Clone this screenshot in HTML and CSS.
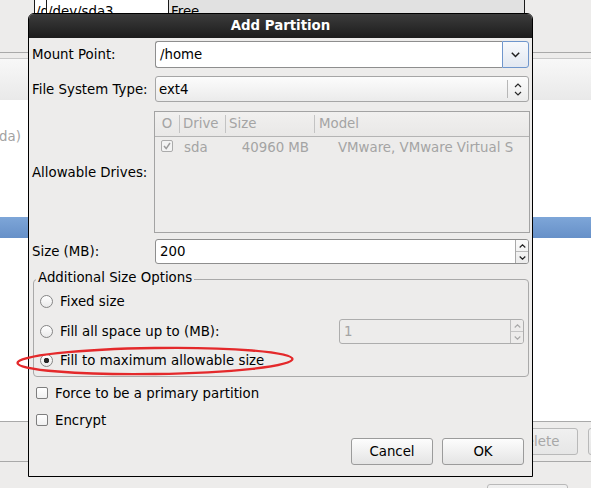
FILE: index.html
```html
<!DOCTYPE html>
<html>
<head>
<meta charset="utf-8">
<title>Add Partition</title>
<link rel="stylesheet" href="styles.css">
</head>
<body>
<div class="screen">
  <div class="bg">
    <div class="bg-top">
      <div class="ptable">
        <div class="pcell c1">/d</div>
        <div class="pcell c2">/dev/sda3</div>
        <div class="pcell c3">Free</div>
      </div>
    </div>
    <div class="bg-rule"></div>
    <div class="bg-toolbar"></div>
    <div class="bg-list">
      <div class="list-text">da)</div>
      <div class="list-sel"></div>
    </div>
    <div class="bg-footer">
      <div class="bg-btn b-delete">Delete</div>
      <div class="bg-btn b-next">Reset</div>
    </div>
    <div class="bg-bottom">
      <div class="bg-btn b-back">Back</div>
    </div>
  </div>

  <div class="dialog">
    <div class="titlebar">Add Partition</div>
    <div class="dbody">
      <div class="row r-mount">
        <span class="lbl">Mount Point:</span>
        <div class="combo-entry">
          <div class="entry">/home</div>
          <div class="drop-btn">
            <svg width="9" height="6" viewBox="0 0 9 6"><polyline points="0.8,0.8 4.5,4.5 8.2,0.8" fill="none" stroke="#1e1e1e" stroke-width="1.5"/></svg>
          </div>
        </div>
      </div>

      <div class="row r-fs">
        <span class="lbl">File System Type:</span>
        <div class="combo-btn">
          <span class="cb-text">ext4</span>
          <span class="cb-sep"></span>
          <span class="cb-arrows">
            <svg width="8" height="13" viewBox="0 0 8 13"><polyline points="1,4 4,1 7,4" fill="none" stroke="#2a2a2a" stroke-width="1.2"/><polyline points="1,9 4,12 7,9" fill="none" stroke="#2a2a2a" stroke-width="1.2"/></svg>
          </span>
        </div>
      </div>

      <div class="row r-drives">
        <span class="lbl">Allowable Drives:</span>
        <div class="drives">
          <div class="dhead">
            <span class="h h0">O</span>
            <span class="h h1">Drive</span>
            <span class="h h2">Size</span>
            <span class="h h3">Model</span>
          </div>
          <div class="drow">
            <span class="d0"><span class="tchk"><svg width="10" height="10" viewBox="0 0 10 10"><polyline points="2,5 4.2,7.6 8,2" fill="none" stroke="#9c9c9c" stroke-width="1.5"/></svg></span></span>
            <span class="d1">sda</span>
            <span class="d2">40960 MB</span>
            <span class="d3">VMware, VMware Virtual S</span>
          </div>
        </div>
      </div>

      <div class="row r-size">
        <span class="lbl">Size (MB):</span>
        <div class="spin">
          <div class="spin-text">200</div>
          <div class="spin-btns">
            <span class="sb"><svg width="7" height="4" viewBox="0 0 7 4"><polyline points="0.7,3.5 3.5,0.8 6.3,3.5" fill="none" stroke="#222" stroke-width="1.2"/></svg></span>
            <span class="sb sb-down"><svg width="7" height="4" viewBox="0 0 7 4"><polyline points="0.7,0.5 3.5,3.2 6.3,0.5" fill="none" stroke="#222" stroke-width="1.2"/></svg></span>
          </div>
        </div>
      </div>

      <fieldset class="opts">
        <legend>Additional Size Options</legend>
        <div class="opt"><span class="radio"></span>Fixed size</div>
        <div class="opt opt-fill"><span class="radio"></span>Fill all space up to (MB):
          <div class="spin spin-dis">
            <div class="spin-text">1</div>
            <div class="spin-btns">
              <span class="sb"><svg width="7" height="4" viewBox="0 0 7 4"><polyline points="0.7,3.5 3.5,0.8 6.3,3.5" fill="none" stroke="#a8a8a8" stroke-width="1.1"/></svg></span>
              <span class="sb sb-down"><svg width="7" height="4" viewBox="0 0 7 4"><polyline points="0.7,0.5 3.5,3.2 6.3,0.5" fill="none" stroke="#a8a8a8" stroke-width="1.1"/></svg></span>
            </div>
          </div>
        </div>
        <div class="opt opt-max"><span class="radio on"></span>Fill to maximum allowable size</div>
      </fieldset>

      <div class="check-row cr1"><span class="chk"></span>Force to be a primary partition</div>
      <div class="check-row cr2"><span class="chk"></span>Encrypt</div>

      <div class="actions">
        <button class="btn">Cancel</button>
        <button class="btn">OK</button>
      </div>
    </div>
  </div>

  <svg class="annot" width="591" height="488" viewBox="0 0 591 488">
    <ellipse cx="155" cy="361" rx="137.5" ry="13" fill="none" stroke="#e4292b" stroke-width="2.4" transform="rotate(-0.8 155 361)"/>
  </svg>
</div>
</body>
</html>
```

FILE: styles.css
```css
* { box-sizing: border-box; }

html, body {
  margin: 0;
  padding: 0;
}

body {
  width: 591px;
  height: 488px;
  overflow: hidden;
  background: #edeceb;
  font-family: "DejaVu Sans", "Liberation Sans", sans-serif;
  font-size: 13.33px;
  color: #000;
}

.screen {
  position: relative;
  width: 591px;
  height: 488px;
  overflow: hidden;
}

/* ---------- background window ---------- */
.bg-top { height: 52px; }

.ptable {
  display: flex;
  margin-left: 34px;
  width: 491px;
  height: 13px;
  overflow: hidden;
}

.pcell {
  height: 13px;
  padding-top: 4px;
  line-height: 16px;
  white-space: nowrap;
  overflow: hidden;
  border-left: 1px solid #1a1a1a;
}

.c1 { width: 12px; background: #fff; padding-left: 1px; }
.c2 { width: 122px; background: #fff; padding-left: 1px; }
.c3 {
  flex: 1;
  background: #e1e1e1;
  padding-left: 2px;
  border-right: 1px solid #1a1a1a;
}

.bg-rule {
  height: 1px;
  background: #a9a9a9;
  margin-bottom: 5px;
}

.bg-toolbar {
  height: 42px;
  border-top: 1px solid #c9c9c9;
  background: linear-gradient(#f8f8f8, #e9e9e9);
}

.bg-list {
  height: 322px;
  background: #fff;
  border-bottom: 1px solid #a9a9a9;
  padding-top: 29px;
}

.list-text {
  height: 16px;
  line-height: 16px;
  margin-left: -1px;
  color: #a2a2a2;
}

.list-sel {
  margin-top: 72px;
  height: 21px;
  background: linear-gradient(#7ea6d8, #6690c8);
}

.bg-footer {
  height: 40px;
  display: flex;
  gap: 10px;
  padding: 6px 0 0 490px;
  border-bottom: 1px solid #a9a9a9;
}

.bg-btn {
  flex: none;
  height: 27px;
  line-height: 25px;
  border: 1px solid #b9b9b9;
  border-radius: 3px;
  background: linear-gradient(#f0f0f0, #e6e6e6);
  color: #a7a7a7;
  text-align: center;
}

.b-delete { width: 88px; padding-left: 7px; }
.b-next { width: 80px; }

.bg-bottom {
  height: 25px;
  padding: 22px 0 0 487px;
}

.b-back { width: 81px; }

/* ---------- dialog ---------- */
.dialog {
  position: absolute;
  left: 28px;
  top: 13px;
  width: 505px;
  height: 464px;
  border: 1px solid #000;
  border-radius: 6px 6px 0 0;
  background: #edeceb;
  overflow: hidden;
}

.titlebar {
  height: 24px;
  line-height: 24px;
  text-align: center;
  font-weight: bold;
  color: #fff;
  background: linear-gradient(#3c3c3c, #1c1c1c);
}

.dbody {
  padding: 0 3px 11px 3px;
}

.row {
  display: grid;
  grid-template-columns: 123px 1fr;
  align-items: center;
}

.lbl { white-space: nowrap; }

.r-mount { margin-top: 3px; height: 27px; }
.r-fs { margin-top: 8px; height: 26px; }
.r-drives { margin-top: 9px; height: 122px; }
.r-size { margin-top: 6px; height: 25px; }

/* mount combo entry */
.combo-entry {
  display: flex;
  height: 27px;
}

.entry {
  flex: 1;
  border: 1px solid #8e8e8e;
  border-right: none;
  border-radius: 3px 0 0 3px;
  background: #fff;
  padding-left: 4px;
  line-height: 25px;
}

.drop-btn {
  width: 27px;
  border: 1px solid #6f96cc;
  border-radius: 0 3px 3px 0;
  background: linear-gradient(#f7f9fc, #e2e8f1);
  display: flex;
  align-items: center;
  justify-content: center;
}

/* fs combo button */
.combo-btn {
  display: flex;
  align-items: center;
  height: 26px;
  border: 1px solid #a6a6a6;
  border-radius: 3px;
  background: linear-gradient(#fcfcfc, #ebebeb);
  padding-left: 3px;
}

.cb-text { flex: 1; }

.cb-sep {
  width: 1px;
  height: 18px;
  background: #b7b7b7;
}

.cb-arrows {
  width: 20px;
  display: flex;
  justify-content: center;
  align-items: center;
}

/* drives table */
.drives {
  margin: 0 -1px;
  height: 122px;
  border: 1px solid #a3a3a3;
  background: #edeceb;
  color: #a4a4a4;
}

.dhead {
  display: flex;
  height: 25px;
  border-bottom: 1px solid #b4b4b4;
  background: linear-gradient(#f1f0ef, #e9e8e7);
}

.h {
  line-height: 24px;
  white-space: nowrap;
}

.h0 { width: 24px; text-align: center; }
.h1, .h2, .h3 {
  background: linear-gradient(#c3c3c3, #c3c3c3) left center / 1px 18px no-repeat;
  padding-left: 4px;
}
.h1 { width: 46px; }
.h2 { width: 89px; }
.h3 { flex: 1; padding-left: 5px; }

.drow {
  display: flex;
  height: 20px;
  align-items: center;
  white-space: nowrap;
}

.d0 {
  width: 24px;
  align-self: flex-start;
  padding-top: 3px;
  display: flex;
  justify-content: center;
}

.tchk {
  width: 12px;
  height: 12px;
  border: 1px solid #ababab;
  border-radius: 2px;
  background: #f3f3f3;
  display: flex;
  align-items: center;
  justify-content: center;
}

.d1 { width: 46px; padding-left: 5px; }
.d2 { width: 89px; text-align: right; padding-right: 5px; }
.d3 { flex: 1; padding-left: 24px; }

/* spin buttons */
.spin {
  display: flex;
  height: 25px;
  border: 1px solid #8e8e8e;
  border-radius: 3px;
  background: #fff;
}

.spin-text {
  flex: 1;
  padding-left: 4px;
  line-height: 23px;
}

.spin-btns {
  width: 13px;
  border-left: 1px solid #a9a9a9;
  display: flex;
  flex-direction: column;
  background: linear-gradient(#fafafa, #ececec);
  border-radius: 0 2px 2px 0;
}

.sb {
  flex: 1;
  display: flex;
  align-items: center;
  justify-content: center;
}

.sb-down { border-top: 1px solid #b9b9b9; }

/* additional options */
.opts {
  margin: 6px 0 0 1px;
  padding: 0 4px 4px 2px;
  border: 1px solid #a9a9a9;
  border-radius: 4px;
  min-width: 0;
}

.opts legend {
  padding: 0 2px 3px 2px;
  line-height: 16px;
}

.opt {
  display: flex;
  align-items: center;
  height: 24px;
  white-space: nowrap;
}

.opt-fill { margin-top: 6px; height: 25px; }
.opt-max { margin-top: 4px; }

.radio {
  flex: none;
  width: 13px;
  height: 13px;
  margin: 0 7px 0 4px;
  border: 1px solid #858585;
  border-radius: 50%;
  background: linear-gradient(#ffffff, #e9e9e9);
}

.radio.on {
  background:
    radial-gradient(circle, #262626 0 2.4px, transparent 3px),
    linear-gradient(#ffffff, #e9e9e9);
}

.spin-dis {
  margin-left: auto;
  width: 185px;
  border-color: #adadad;
  background: #edeceb;
  color: #a4a4a4;
}

.spin-dis .spin-btns {
  border-left-color: #bdbdbd;
  background: #edeceb;
}

.spin-dis .sb-down { border-top-color: #c4c4c4; }

/* check rows */
.check-row {
  display: flex;
  align-items: center;
  height: 24px;
  padding-left: 4px;
}

.cr1 { margin-top: 4px; }
.cr2 { margin-top: 3px; }

.chk {
  flex: none;
  width: 12px;
  height: 12px;
  margin-right: 7px;
  border: 1px solid #7e7e7e;
  border-radius: 2px;
  background: linear-gradient(#ffffff, #f0f0f0);
}

/* action buttons */
.actions {
  display: flex;
  justify-content: flex-end;
  gap: 9px;
  margin-top: 6px;
  padding-right: 5px;
}

.btn {
  width: 82px;
  height: 27px;
  padding: 0;
  border: 1px solid #9b9b9b;
  border-radius: 3px;
  background: linear-gradient(#fdfdfd, #e4e4e4);
  font: inherit;
  color: #000;
}

/* annotation */
.annot {
  position: absolute;
  left: 0;
  top: 0;
  pointer-events: none;
}
```
